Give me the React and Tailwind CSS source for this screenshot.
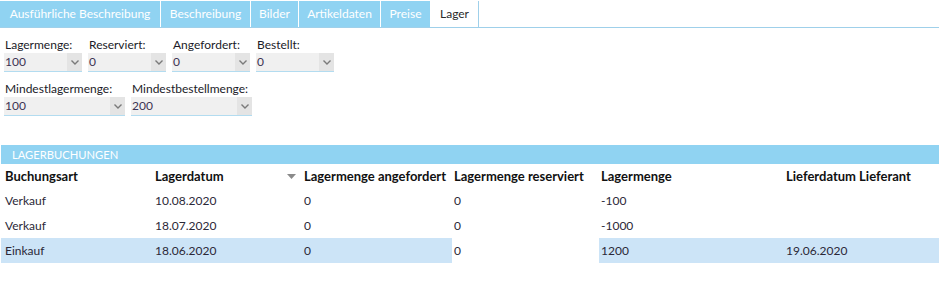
import React from "react";

const tabs = [
  { label: "Ausführliche Beschreibung", w: "w-[161px]" },
  { label: "Beschreibung", w: "w-[90px]" },
  { label: "Bilder", w: "w-[48px]" },
  { label: "Artikeldaten", w: "w-[82px]" },
  { label: "Preise", w: "w-[50px]" },
];

function Chevron() {
  return (
    <svg width="8" height="5" viewBox="0 0 8 5" className="block">
      <path d="M0.5 0.5 L4 4 L7.5 0.5" fill="none" stroke="#7a7a7a" strokeWidth="1.4" />
    </svg>
  );
}

function Combo({ label, value, w }) {
  return (
    <div className={`flex flex-col ${w}`}>
      <div className="h-[16px] text-[12px] leading-[16px] text-[#1b1b28] pl-[1px]">{label}</div>
      <div className="h-[19px] flex border-b border-[#b3dcf0] bg-[#f0f0f0]">
        <div className="flex-1 text-[12px] leading-[18px] text-[#3d3354] pl-[1px]">{value}</div>
        <div className="w-[15px] bg-[#e4e4e4] flex items-center justify-center">
          <Chevron />
        </div>
      </div>
    </div>
  );
}

const cols = "grid grid-cols-[150px_150px_151px_147px_185px_1fr]";
const pads = ["pl-[4px]", "pl-[4px]", "pl-[3px]", "pl-[2px]", "pl-[2px]", "pl-[2px]"];

const headers = [
  "Buchungsart",
  "Lagerdatum",
  "Lagermenge angefordert",
  "Lagermenge reserviert",
  "Lagermenge",
  "Lieferdatum Lieferant",
];

const rows = [
  { cells: ["Verkauf", "10.08.2020", "0", "0", "-100", ""], sel: false },
  { cells: ["Verkauf", "18.07.2020", "0", "0", "-1000", ""], sel: false },
  { cells: ["Einkauf", "18.06.2020", "0", "0", "1200", "19.06.2020"], sel: true },
];

export default function App() {
  return (
    <div className="w-[939px] h-[285px] bg-white overflow-hidden font-['Lato','Noto_Sans',sans-serif]">
      {/* Tabs */}
      <div className="flex pt-[1px] border-b border-[#9fd0ea] h-[28px]">
        {tabs.map((t) => (
          <div
            key={t.label}
            className={`${t.w} h-[26px] flex items-center justify-center bg-[#90d3f2] text-white text-[12px] border-r border-white`}
          >
            {t.label}
          </div>
        ))}
        <div className="w-[48px] h-[26px] flex items-center justify-center bg-white text-[#2a2a2a] text-[12px] border-r border-[#9fd0ea]">
          Lager
        </div>
      </div>

      {/* Form */}
      <div className="pl-[4px] pt-[9px] flex flex-col gap-[9px]">
        <div className="flex gap-[6px]">
          <Combo label="Lagermenge:" value="100" w="w-[78px]" />
          <Combo label="Reserviert:" value="0" w="w-[78px]" />
          <Combo label="Angefordert:" value="0" w="w-[78px]" />
          <Combo label="Bestellt:" value="0" w="w-[78px]" />
        </div>
        <div className="flex gap-[6px]">
          <Combo label="Mindestlagermenge:" value="100" w="w-[121px]" />
          <Combo label="Mindestbestellmenge:" value="200" w="w-[121px]" />
        </div>
      </div>

      {/* Section */}
      <div className="mt-[29px] ml-[1px]">
        <div className="h-[19px] bg-[#90d3f2] text-white text-[11.2px] leading-[19px] pl-[11px]">
          LAGERBUCHUNGEN
        </div>
        <div className={`${cols} h-[23px] items-center mt-[1px]`}>
          {headers.map((h, i) => (
            <div
              key={h}
              className={`${pads[i]} font-bold text-[13px] text-[#111] whitespace-nowrap ${
                i === 1 ? "flex items-center justify-between pr-[5px]" : ""
              }`}
            >
              <span>{h}</span>
              {i === 1 && (
                <svg width="9" height="5" viewBox="0 0 9 5">
                  <path d="M0 0 L9 0 L4.5 5 Z" fill="#8a8a8a" />
                </svg>
              )}
            </div>
          ))}
        </div>
        {rows.map((r, ri) => (
          <div key={ri} className={`${cols} h-[25px]`}>
            {r.cells.map((c, i) => (
              <div
                key={i}
                className={`${pads[i]} flex items-center text-[12px] text-[#2b2838] ${
                  r.sel && i !== 3 ? "bg-[#cce4f7]" : ""
                }`}
              >
                {c}
              </div>
            ))}
          </div>
        ))}
      </div>
    </div>
  );
}
